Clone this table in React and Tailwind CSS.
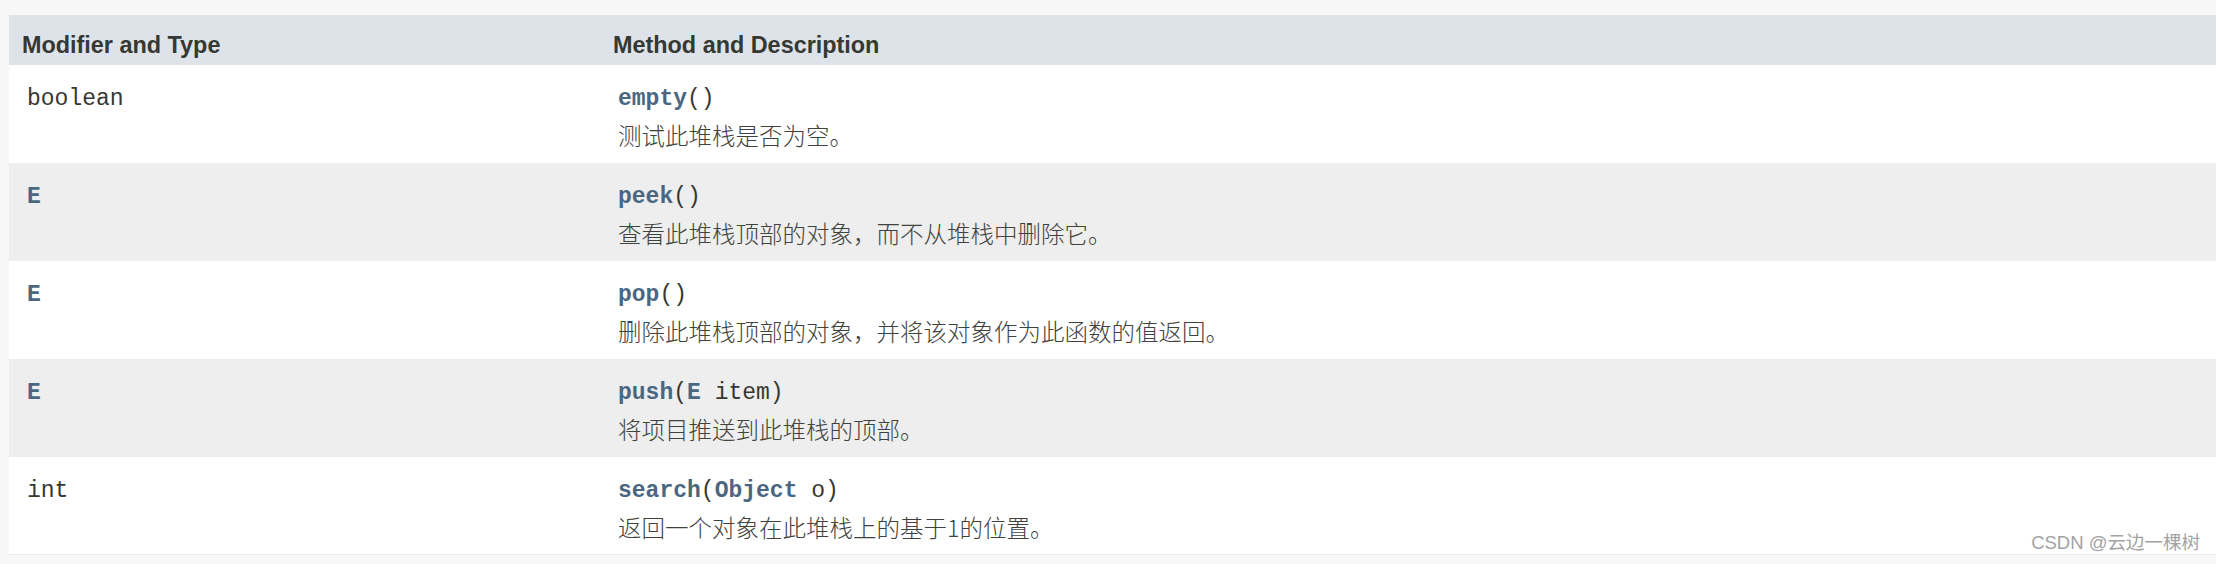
import React from 'react';

const mono = { fontFamily: '"Liberation Mono", "Courier New", monospace' };

const rows = [
  {
    type: [{ t: 'boolean' }],
    sig: [{ t: 'empty', b: true }, { t: '()' }],
    desc: '测试此堆栈是否为空。',
  },
  {
    type: [{ t: 'E', b: true }],
    sig: [{ t: 'peek', b: true }, { t: '()' }],
    desc: '查看此堆栈顶部的对象，而不从堆栈中删除它。',
  },
  {
    type: [{ t: 'E', b: true }],
    sig: [{ t: 'pop', b: true }, { t: '()' }],
    desc: '删除此堆栈顶部的对象，并将该对象作为此函数的值返回。',
  },
  {
    type: [{ t: 'E', b: true }],
    sig: [{ t: 'push', b: true }, { t: '(' }, { t: 'E', b: true }, { t: ' item)' }],
    desc: '将项目推送到此堆栈的顶部。',
  },
  {
    type: [{ t: 'int' }],
    sig: [{ t: 'search', b: true }, { t: '(' }, { t: 'Object', b: true }, { t: ' o)' }],
    desc: '返回一个对象在此堆栈上的基于1的位置。',
  },
];

const Code = ({ parts }) => (
  <div className="text-[23px] leading-[26px] whitespace-pre text-[#353833]" style={mono}>
    {parts.map((p, i) => (
      <span key={i} className={p.b ? 'font-bold text-[#4a6782]' : ''}>
        {p.t}
      </span>
    ))}
  </div>
);

export default function App() {
  return (
    <div className="relative w-[2216px] h-[564px] bg-[#f7f7f7] pt-[15px] pl-[9px] overflow-hidden">
      <div className="border-b border-[#ebebeb]">
        {/* header */}
        <div
          className="grid grid-cols-[591px_1fr] h-[50px] bg-[#dee3e9] text-[23.4px] leading-[26px] font-bold text-[#353833]"
          style={{ fontFamily: '"Liberation Sans", Arial, sans-serif' }}
        >
          <div className="pl-[13px] pt-[17px]">Modifier and Type</div>
          <div className="pl-[13px] pt-[17px]">Method and Description</div>
        </div>

        {rows.map((r, i) => (
          <div
            key={i}
            className={`grid grid-cols-[591px_1fr] ${i === rows.length - 1 ? 'h-[97px]' : 'h-[98px]'} ${i % 2 === 1 ? 'bg-[#eeeeee]' : 'bg-white'}`}
          >
            <div className="pl-[18px] pt-[21px]">
              <Code parts={r.type} />
            </div>
            <div className="pl-[18px] pt-[21px] flex flex-col">
              <Code parts={r.sig} />
              <div
                className="mt-[7px] text-[23.5px] leading-[33px] font-light text-[#3f423d]"
                style={{ fontFamily: '"Noto Sans CJK SC", "Liberation Serif", serif' }}
              >
                {r.desc}
              </div>
            </div>
          </div>
        ))}
      </div>

      {/* watermark */}
      <div
        className="absolute right-[16px] top-[533px] text-[18.5px] leading-[20px] text-[#a3a3a3] whitespace-nowrap"
        style={{ fontFamily: '"Liberation Sans", "Noto Sans CJK SC", sans-serif' }}
      >
        CSDN @云边一棵树
      </div>
    </div>
  );
}
